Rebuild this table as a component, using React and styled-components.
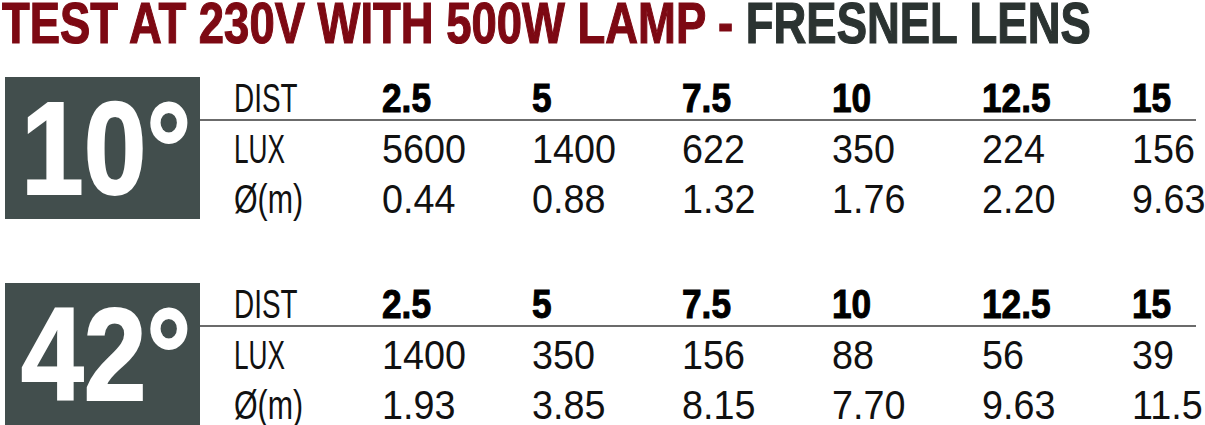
import styled, { createGlobalStyle } from "styled-components";

const GlobalStyle = createGlobalStyle`
html, body {
    margin: 0;
    padding: 0;
    background: #ffffff;
    overflow: hidden;
}
`;

const Page = styled.div`
    width: 1205px;
    height: 425px;
    overflow: hidden;
    font-family: "Liberation Sans", Arial, sans-serif;
`;

// the print uses a condensed face, so squeeze the text sideways
const Squeeze = styled.span`
    display: inline-block;
    white-space: nowrap;
    transform: scaleX(${({ $sx }) => $sx});
    transform-origin: left center;
`;

const Title = styled.h1`
    margin: 0 0 0 2px;
    font-size: 57px;
    line-height: 46px;
    font-weight: 700;
    color: #7d0913;
    -webkit-text-stroke: 1.2px currentColor;
    white-space: nowrap;
`;

const Dark = styled.span`
    color: #2b3331;
`;

const Block = styled.section`
    display: flex;
    margin-top: ${({ $first }) => ($first ? "31px" : "59px")};
    height: 147px;
`;

const AngleBox = styled.div`
    width: 195px;
    height: 142px;
    margin-left: 5px;
    flex-shrink: 0;
    box-sizing: border-box;
    padding: 6px 0 0 16px;
    background: #424e4d;
    color: #ffffff;
    font-size: 131px;
    line-height: 131px;
    font-weight: 700;
    -webkit-text-stroke: 2px currentColor;
`;

const Table = styled.div`
    width: 996px;
    flex-shrink: 0;
`;

const Row = styled.div`
    display: grid;
    grid-template-columns: 148px repeat(6, 150px);
    padding-left: 34px;
    font-size: 41px;
    line-height: ${({ $head }) => ($head ? "42px" : "50px")};
    color: #111111;
    white-space: nowrap;
    border-bottom: ${({ $head }) => ($head ? "2px solid #6b6b6b" : "none")};
    margin-bottom: ${({ $head }) => ($head ? "3px" : "0")};
`;

const Cell = styled.div`
    font-weight: ${({ $bold }) => ($bold ? 700 : 400)};
    color: ${({ $bold }) => ($bold ? "#000000" : "#111111")};
    -webkit-text-stroke: ${({ $bold }) => ($bold ? "1px currentColor" : "0")};
`;

const dists = ["2.5", "5", "7.5", "10", "12.5", "15"];

const tests = [
    {
        angle: "10°",
        lux: ["5600", "1400", "622", "350", "224", "156"],
        diam: ["0.44", "0.88", "1.32", "1.76", "2.20", "9.63"],
    },
    {
        angle: "42°",
        lux: ["1400", "350", "156", "88", "56", "39"],
        diam: ["1.93", "3.85", "8.15", "7.70", "9.63", "11.5"],
    },
];

const App = () => {
    return (
        <Page>
            <GlobalStyle />
            <Title>
                <Squeeze $sx={0.797}>
                    TEST AT 230V WITH 500W LAMP - <Dark>FRESNEL LENS</Dark>
                </Squeeze>
            </Title>
            {tests.map((t, i) => (
                <Block key={t.angle} $first={i === 0}>
                    <AngleBox>
                        <Squeeze $sx={0.86}>{t.angle}</Squeeze>
                    </AngleBox>
                    <Table>
                        <Row $head>
                            <Cell>
                                <Squeeze $sx={0.68}>DIST</Squeeze>
                            </Cell>
                            {dists.map((d) => (
                                <Cell key={d} $bold>
                                    <Squeeze $sx={0.86}>{d}</Squeeze>
                                </Cell>
                            ))}
                        </Row>
                        <Row>
                            <Cell>
                                <Squeeze $sx={0.64}>LUX</Squeeze>
                            </Cell>
                            {t.lux.map((v, k) => (
                                <Cell key={k}>
                                    <Squeeze $sx={0.92}>{v}</Squeeze>
                                </Cell>
                            ))}
                        </Row>
                        <Row>
                            <Cell>
                                <Squeeze $sx={0.74}>Ø(m)</Squeeze>
                            </Cell>
                            {t.diam.map((v, k) => (
                                <Cell key={k}>
                                    <Squeeze $sx={0.92}>{v}</Squeeze>
                                </Cell>
                            ))}
                        </Row>
                    </Table>
                </Block>
            ))}
        </Page>
    );
};

export default App;
